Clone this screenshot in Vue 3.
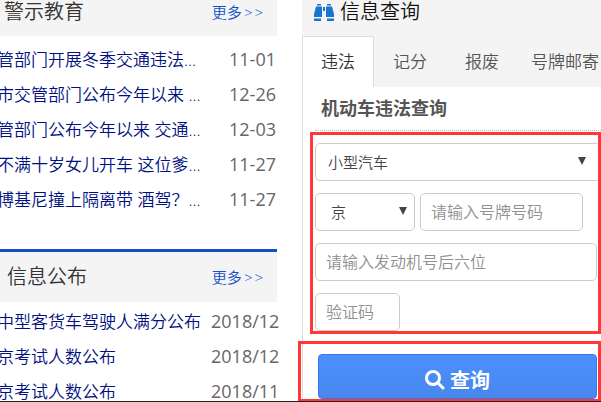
<template>
  <div class="page">
    <!-- News lists -->
    <div class="news-column">
      <section v-for="block in newsBlocks" :key="block.title" class="news-block" :class="block.kind">
        <header class="news-header">
          <h2 class="news-title">{{ block.title }}</h2>
          <a class="news-more" href="#">更多<span>&gt;</span><span>&gt;</span></a>
        </header>
        <ul class="news-list">
          <li v-for="(item, index) in block.items" :key="index" class="news-item">
            <a class="news-link" href="#">{{ item.text }}</a>
            <span class="news-date">{{ item.date }}</span>
          </li>
        </ul>
      </section>
    </div>

    <!-- Query panel -->
    <section class="query-panel">
      <header class="query-header">
        <svg class="binoculars" viewBox="0 0 20 17" width="20" height="17" aria-hidden="true">
          <path d="M3 0h4v1.500H3zM13 0h4v1.500h-4zM2 2.500h6V13H0v-3zM12 2.500h6l2 7.500v3h-8zM9 3h2v4H9zM0 14.500h7V17H0zM13 14.500h7V17h-7z" fill="#1a73cc" />
        </svg>
        <h2 class="query-title">信息查询</h2>
      </header>

      <nav class="tabs">
        <button
          v-for="tab in tabs"
          :key="tab"
          type="button"
          class="tab"
          :class="{ active: tab === activeTab }"
          @click="activeTab = tab"
        >{{ tab }}</button>
      </nav>

      <form class="query-body" @submit.prevent>
        <h3 class="form-title">机动车违法查询</h3>

        <div class="fields">
          <div class="select-box">
            <select v-model="vehicleType" class="control" aria-label="车辆类型">
              <option>小型汽车</option>
            </select>
            <svg class="caret" viewBox="0 0 8 8" width="8" height="8" aria-hidden="true"><path d="M0 0h8L4 8z" fill="#444" /></svg>
          </div>
          <div class="field-row">
            <div class="select-box province">
              <select v-model="province" class="control" aria-label="省份">
                <option>京</option>
              </select>
              <svg class="caret" viewBox="0 0 8 8" width="8" height="8" aria-hidden="true"><path d="M0 0h8L4 8z" fill="#444" /></svg>
            </div>
            <input v-model="plate" class="control plate" type="text" placeholder="请输入号牌号码" aria-label="号牌号码" />
          </div>
          <input v-model="engine" class="control engine" type="text" placeholder="请输入发动机号后六位" aria-label="发动机号" />
          <input v-model="captcha" class="control captcha" type="text" placeholder="验证码" aria-label="验证码" />
        </div>

        <div class="submit-area">
          <button type="submit" class="submit">
            <svg viewBox="0 0 20 20" width="20" height="20" aria-hidden="true">
              <circle cx="8" cy="8" r="6.500" fill="none" stroke="#fff" stroke-width="3" />
              <path d="M13 13l5 5" stroke="#fff" stroke-width="3" stroke-linecap="round" />
            </svg>
            <span>查询</span>
          </button>
        </div>
      </form>
    </section>
  </div>
</template>

<script setup>
import { ref } from 'vue';

const newsBlocks = [
  {
    title: '警示教育',
    kind: 'warning',
    items: [
      { text: '管部门开展冬季交通违法...', date: '11-01' },
      { text: '市交管部门公布今年以来 ...', date: '12-26' },
      { text: '管部门公布今年以来 交通...', date: '12-03' },
      { text: '不满十岁女儿开车 这位爹...', date: '11-27' },
      { text: '博基尼撞上隔离带 酒驾？...', date: '11-27' }
    ]
  },
  {
    title: '信息公布',
    kind: 'notice',
    items: [
      { text: '中型客货车驾驶人满分公布', date: '2018/12' },
      { text: '京考试人数公布', date: '2018/12' },
      { text: '京考试人数公布', date: '2018/11' }
    ]
  }
];

const tabs = ['违法', '记分', '报废', '号牌邮寄'];
const activeTab = ref('违法');

const vehicleType = ref('小型汽车');
const province = ref('京');
const plate = ref('');
const engine = ref('');
const captcha = ref('');
</script>

<style>
body {
  margin: 0;
  background: #fff;
}
</style>

<style scoped>
.page {
  box-sizing: border-box;
  display: flex;
  gap: 25px;
  height: 100vh;
  overflow: hidden;
  border-bottom: 1px solid #222;
  font-family: "Open Sans", "Noto Sans CJK SC", sans-serif;
  font-weight: 350;
  color: #333;
}

h2,
h3,
ul {
  margin: 0;
  padding: 0;
  font-weight: inherit;
}

button,
input,
select {
  font-family: inherit;
  font-weight: inherit;
}

/* News lists */
.news-column {
  flex: 277 1 0;
  min-width: 0;
}

.news-header {
  display: flex;
  align-items: center;
  justify-content: space-between;
  box-sizing: border-box;
  height: 50px;
  padding: 0 14px 0 7px;
  background: #f4f4f4;
}

.warning .news-header {
  height: 36px;
  padding-left: 4px;
  padding-bottom: 12px;
}

.notice .news-header {
  height: 53px;
  border-top: 3px solid #124fcb;
}

.news-title {
  font-size: 20px;
  line-height: 24px;
}

.news-more {
  display: flex;
  gap: 2px;
  font-size: 15px;
  line-height: 24px;
  color: #1450cc;
  text-decoration: none;
}

.news-list {
  list-style: none;
  padding-top: 6px;
}

.warning .news-list {
  padding-bottom: 32px;
}

.notice .news-list {
  padding-top: 2px;
}

.news-item {
  display: flex;
  justify-content: space-between;
  height: 35px;
  line-height: 35px;
  white-space: nowrap;
}

.news-link {
  margin-left: -3px;
  font-size: 17px;
  color: #00107f;
  text-decoration: none;
}

.news-date {
  flex: none;
  width: 48px;
  font-size: 18px;
  font-weight: 400;
  color: #666;
}

.notice .news-date {
  width: 66px;
}

/* Query panel */
.query-panel {
  flex: 299 1 0;
  min-width: 0;
}

.query-header {
  display: flex;
  align-items: center;
  gap: 6px;
  box-sizing: border-box;
  height: 36px;
  padding: 0 12px 12px;
  background: #f4f4f4;
}

.query-title {
  font-size: 20px;
  line-height: 24px;
  color: #111;
}

.tabs {
  display: flex;
  overflow: hidden;
  height: 51px;
  background: #f4f4f4;
}

.tab {
  flex: none;
  min-width: 72px;
  padding: 0 12px 4px;
  border: 1px solid transparent;
  border-bottom: 0;
  background: none;
  font-size: 17px;
  color: #555;
}

.tab.active {
  border-color: #ddd;
  background: #fff;
  color: #333;
}

.query-body {
  border-left: 1px solid #ddd;
  padding-left: 12px;
}

.form-title {
  padding: 7px 6px;
  border-bottom: 1px dotted #bbb;
  font-size: 18px;
  font-weight: bold;
  line-height: 29px;
  color: #555;
}

/* Red highlight frames lie over the panel */
.fields,
.submit-area {
  position: relative;
}

.fields::after,
.submit-area::after {
  content: "";
  position: absolute;
  border: 3px solid #ff3737;
  pointer-events: none;
}

.fields::after {
  inset: 1px 0 -3px -5px;
}

.submit-area::after {
  inset: -13px 0 -3px -17px;
}

.fields {
  display: flex;
  flex-direction: column;
  gap: 12px;
  padding-top: 12px;
}

.field-row {
  display: flex;
  gap: 5px;
  margin-right: 18px;
}

.control {
  box-sizing: border-box;
  display: block;
  width: 100%;
  height: 38px;
  padding: 0 10px;
  border: 1px solid #ccc;
  border-radius: 5px;
  background: #fff;
  font-size: 16px;
  color: #444;
}

.control::placeholder {
  color: #909090;
  opacity: 1;
}

.select-box {
  position: relative;
}

.select-box .control {
  appearance: none;
  padding: 0 12px;
  font-size: 15px;
}

.province {
  flex: none;
  width: 100px;
}

.province .control {
  padding-left: 15px;
}

.caret {
  position: absolute;
  top: 14px;
  right: 15px;
  pointer-events: none;
}

.province .caret {
  right: 8px;
}

.plate {
  flex: 1;
  min-width: 0;
}

.engine {
  width: auto;
  margin-right: 4px;
}

.captcha {
  width: 85px;
}

.submit-area {
  margin-top: 23px;
  padding: 0 4px 0 3px;
}

.submit {
  display: flex;
  align-items: center;
  justify-content: center;
  gap: 5px;
  width: 100%;
  height: 45px;
  padding: 6px 0 0;
  border: 1px solid #3079ed;
  border-radius: 4px;
  background: linear-gradient(#4d90fe, #4787ed);
  color: #fff;
  font-size: 20px;
  font-weight: bold;
}
</style>
